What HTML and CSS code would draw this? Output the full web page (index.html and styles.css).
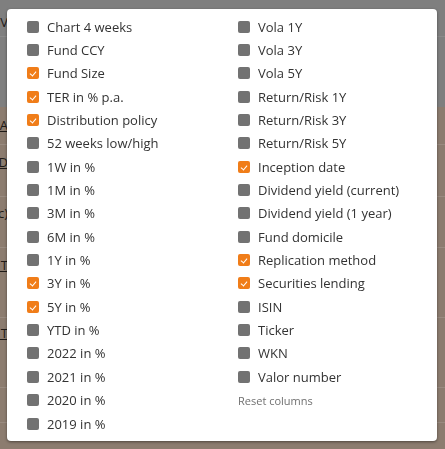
FILE: index.html
```html
<!DOCTYPE html>
<html>
<head>
<link rel="stylesheet" href="styles.css">
</head>
<body>

<div class="page">
  <div class="band">
    <div class="row r1"><span class="cell">Fund V</span></div>
    <div class="row r2"></div>
  </div>
  <div class="rows">
    <div class="row r3"><span class="cell link">ETF A</span></div>
    <div class="row r4"><span class="cell link">ETF D</span></div>
    <div class="row r5"><span class="cell">(Acc)</span></div>
    <div class="row r6"><span class="cell link">ETF T</span></div>
    <div class="row r7"><span class="cell link">ETF T</span></div>
    <div class="row r8"></div>
    <div class="row r9"></div>
  </div>
</div>

<div class="overlay">
  <div class="menu">
    <div class="col">
      <label class="opt"><span class="box"></span>Chart 4 weeks</label>
      <label class="opt"><span class="box"></span>Fund CCY</label>
      <label class="opt"><span class="box on"></span>Fund Size</label>
      <label class="opt"><span class="box on"></span>TER in % p.a.</label>
      <label class="opt"><span class="box on"></span>Distribution policy</label>
      <label class="opt"><span class="box"></span>52 weeks low/high</label>
      <label class="opt"><span class="box"></span>1W in %</label>
      <label class="opt"><span class="box"></span>1M in %</label>
      <label class="opt"><span class="box"></span>3M in %</label>
      <label class="opt"><span class="box"></span>6M in %</label>
      <label class="opt"><span class="box"></span>1Y in %</label>
      <label class="opt"><span class="box on"></span>3Y in %</label>
      <label class="opt"><span class="box on"></span>5Y in %</label>
      <label class="opt"><span class="box"></span>YTD in %</label>
      <label class="opt"><span class="box"></span>2022 in %</label>
      <label class="opt"><span class="box"></span>2021 in %</label>
      <label class="opt"><span class="box"></span>2020 in %</label>
      <label class="opt"><span class="box"></span>2019 in %</label>
    </div>
    <div class="col">
      <label class="opt"><span class="box"></span>Vola 1Y</label>
      <label class="opt"><span class="box"></span>Vola 3Y</label>
      <label class="opt"><span class="box"></span>Vola 5Y</label>
      <label class="opt"><span class="box"></span>Return/Risk 1Y</label>
      <label class="opt"><span class="box"></span>Return/Risk 3Y</label>
      <label class="opt"><span class="box"></span>Return/Risk 5Y</label>
      <label class="opt"><span class="box on"></span>Inception date</label>
      <label class="opt"><span class="box"></span>Dividend yield (current)</label>
      <label class="opt"><span class="box"></span>Dividend yield (1 year)</label>
      <label class="opt"><span class="box"></span>Fund domicile</label>
      <label class="opt"><span class="box on"></span>Replication method</label>
      <label class="opt"><span class="box on"></span>Securities lending</label>
      <label class="opt"><span class="box"></span>ISIN</label>
      <label class="opt"><span class="box"></span>Ticker</label>
      <label class="opt"><span class="box"></span>WKN</label>
      <label class="opt"><span class="box"></span>Valor number</label>
      <div class="reset">Reset columns</div>
    </div>
  </div>
</div>

</body>
</html>
```

FILE: styles.css
```css
body {
  margin: 0;
  font-family: "Open Sans", sans-serif;
  background-color: #8c7c6f;
}

.page {
  height: 449px;
  overflow: hidden;
}

.band {
  background-color: #7f7f7f;
}

.row {
  border-bottom: 1px solid #998b80;
  box-sizing: border-box;
  font-size: 13px;
  color: #1e1a17;
}

.band .row {
  border-bottom-color: #8a8a8a;
}

.r1 { height: 37px; padding-top: 13px; }
.r2 { height: 70px; border-bottom: none; }
.r3 { height: 38px; padding-top: 9px; }
.r4 { height: 52px; padding-top: 8px; }
.r5 { height: 51px; padding-top: 7px; }
.r6 { height: 70px; padding-top: 8px; }
.r7 { height: 70px; padding-top: 6px; }
.r8 { height: 35px; }
.r9 { height: 26px; border-bottom: none; }

.cell {
  display: block;
  width: 8px;
  overflow: hidden;
  white-space: nowrap;
  direction: rtl;
  text-align: left;
}

.link {
  text-decoration: underline;
}

.overlay {
  position: fixed;
  left: 0;
  top: 0;
  width: 100%;
  height: 100%;
}

.menu {
  margin: 9px 0 0 7px;
  width: 430px;
  height: 432px;
  box-sizing: border-box;
  padding: 6px 0 0 20px;
  background-color: #fff;
  border-radius: 4px;
  box-shadow: 0 1px 3px rgba(0,0,0,0.45);
  display: flex;
}

.col {
  width: 211px;
  flex-shrink: 0;
  display: flex;
  flex-direction: column;
}

.opt {
  display: flex;
  align-items: center;
  height: 23.35px;
  font-size: 13px;
  color: #333;
  white-space: nowrap;
}

.box {
  width: 12px;
  height: 12px;
  border-radius: 2px;
  background-color: #727272;
  margin-right: 8px;
  flex-shrink: 0;
  position: relative;
}

.box.on {
  background-color: #f07d19;
}

.box.on::after {
  content: "";
  position: absolute;
  left: 4px;
  top: 3px;
  width: 3px;
  height: 5px;
  border-right: 1px solid #fff;
  border-bottom: 1px solid #fff;
  transform: rotate(40deg);
}

.reset {
  height: 23.35px;
  line-height: 23.35px;
  font-size: 11px;
  color: #707070;
}
```
